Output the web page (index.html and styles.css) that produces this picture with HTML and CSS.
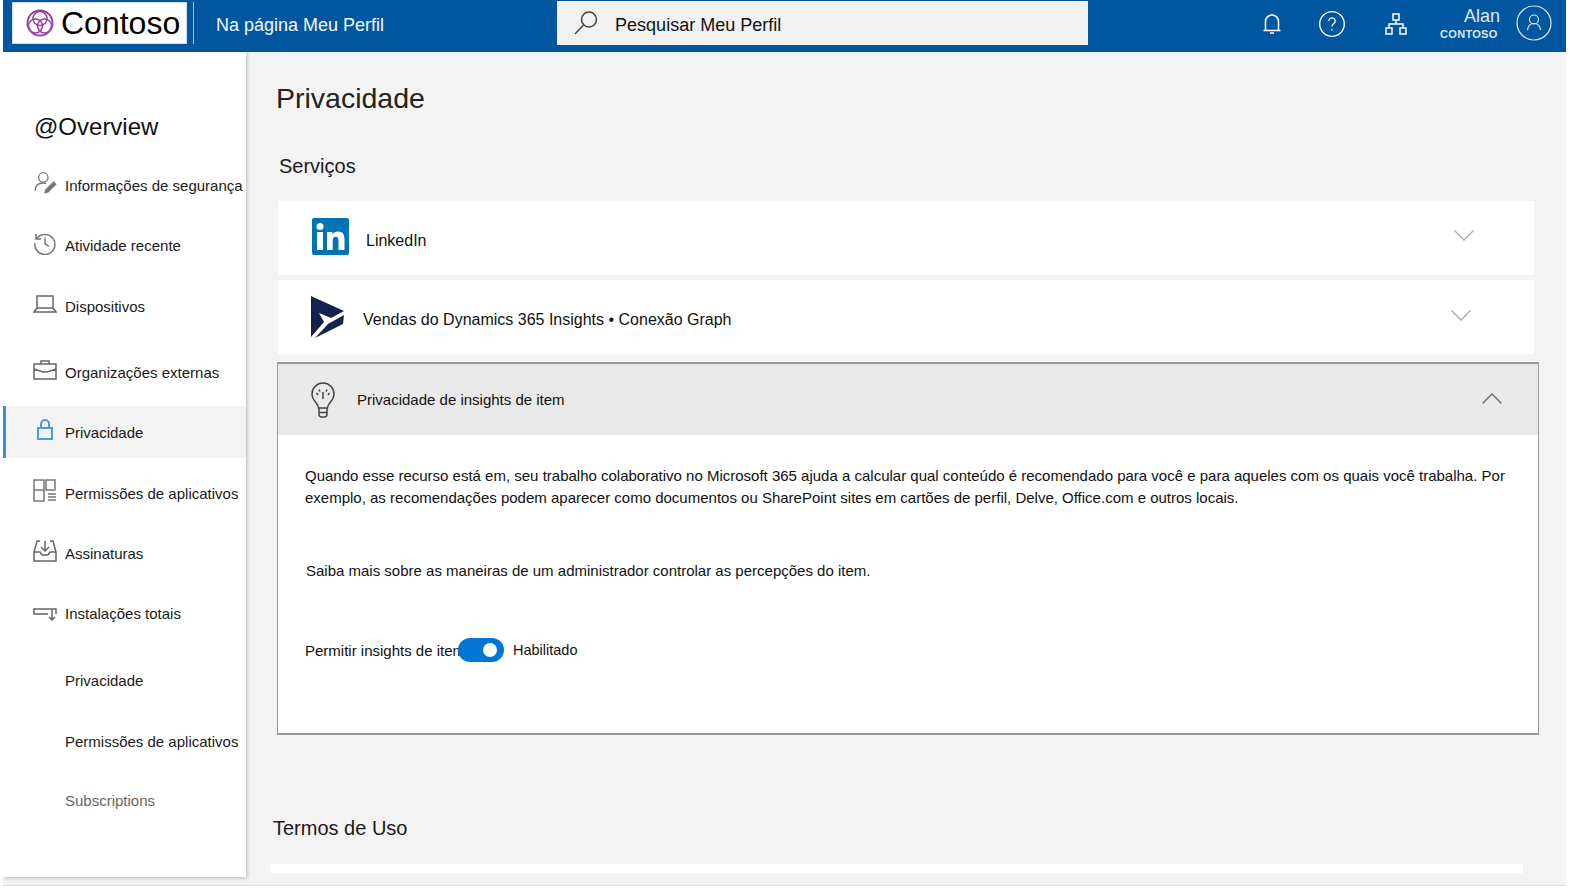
FILE: index.html
```html
<!DOCTYPE html>
<html lang="pt">

<head>
    <meta charset="UTF-8">
    <meta name="viewport" content="width=device-width, initial-scale=1.0">
    <title>Privacidade</title>
    <link rel="stylesheet" href="styles.css">
</head>

<body>
    <div class="app">
        <header class="topbar">
            <div class="logo-box">
                <svg class="logo-mark" viewBox="0 0 30 30" fill="none" stroke="#9a3fa5" stroke-width="2">
                    <circle cx="15" cy="15" r="12.5" />
                    <circle cx="15" cy="10.5" r="7" stroke-width="1.5" />
                    <circle cx="10.5" cy="18" r="7" stroke-width="1.5" />
                    <circle cx="19.5" cy="18" r="7" stroke-width="1.5" />
                </svg>
                <span class="logo-text">Contoso</span>
            </div>
            <div class="divider"></div>
            <div class="page-name">Na página Meu Perfil</div>
            <div class="search">
                <svg class="search-icon" viewBox="0 0 26 26" fill="none" stroke="#444" stroke-width="1.5">
                    <circle cx="16" cy="9.5" r="7.5" />
                    <path d="M10.5 15 2 24" />
                </svg>
                <span>Pesquisar Meu Perfil</span>
            </div>
            <div class="top-icons">
                <svg class="top-icon" viewBox="0 0 24 24" fill="none" stroke="#fff" stroke-width="1.5">
                    <path d="M5.5 18V9.5a6.500 6.500 0 0 1 13 0V18M3.500 18.500h17M10 21h4" />
                </svg>
                <svg class="top-icon help" viewBox="0 0 28 28" fill="none" stroke="#fff" stroke-width="1.3">
                    <circle cx="14" cy="14" r="12.300" />
                    <path d="M10.800 11a3.200 3.200 0 1 1 4.800 2.800c-1.100.7-1.600 1.300-1.600 2.700M14 19v1.500" />
                </svg>
                <svg class="top-icon org" viewBox="0 0 24 24" fill="none" stroke="#fff" stroke-width="1.5">
                    <rect x="9" y="2" width="6" height="6" />
                    <rect x="2" y="16" width="6" height="6" />
                    <rect x="16" y="16" width="6" height="6" />
                    <path d="M12 8v4M5 16v-4h14v4" />
                </svg>
            </div>
            <div class="user">
                <div class="user-name">Alan</div>
                <div class="user-org">CONTOSO</div>
            </div>
            <svg class="avatar" viewBox="0 0 36 36" fill="none" stroke="#dce8f3" stroke-width="1.200">
                <circle cx="18" cy="18" r="17" />
                <circle cx="18" cy="14.500" r="4.500" />
                <path d="M11.500 25c.5-4.500 3-6.500 6.500-6.500s6 2 6.500 6.500" />
            </svg>
        </header>

        <div class="layout">
            <nav class="sidebar">
                <h2 class="nav-title">@Overview</h2>
                <ul class="nav-list">
                    <li class="nav-item">
                        <svg class="nav-icon" viewBox="0 0 28 28" fill="none" stroke="#777" stroke-width="1.500">
                            <circle cx="12" cy="7.500" r="5.500" />
                            <path d="M2.500 23c0-6 3.500-9 9.500-9 1.500 0 2.500.2 3.500.6" />
                            <path d="M14 25.500l1-3.500 9-9 2.500 2.500-9 9z" fill="#777" />
                        </svg>
                        <span>Informações de segurança</span>
                    </li>
                    <li class="nav-item">
                        <svg class="nav-icon" viewBox="0 0 24 24" fill="none" stroke="#777" stroke-width="1.500">
                            <path d="M3.500 8A10 10 0 1 1 2 12M3 3v5h5M12 6.500V12.500l4 3" />
                        </svg>
                        <span>Atividade recente</span>
                    </li>
                    <li class="nav-item">
                        <svg class="nav-icon" viewBox="0 0 24 24" fill="none" stroke="#666" stroke-width="1.500">
                            <path d="M4 4h16v12H4zM1 20h22l-3-4H4z" />
                        </svg>
                        <span>Dispositivos</span>
                    </li>
                    <li class="nav-item">
                        <svg class="nav-icon" viewBox="0 0 24 24" fill="none" stroke="#666" stroke-width="1.500">
                            <path d="M1 6h22v15H1zM8 6V3h8v3M1 11l9 3h4l9-3" />
                        </svg>
                        <span>Organizações externas</span>
                    </li>
                    <li class="nav-item active">
                        <svg class="nav-icon" viewBox="0 0 24 24" fill="none" stroke="#4a9ae0" stroke-width="2">
                            <path d="M5 10h14v11H5zM8 10V6a4 4 0 0 1 8 0v4" />
                        </svg>
                        <span>Privacidade</span>
                    </li>
                    <li class="nav-item">
                        <svg class="nav-icon" viewBox="0 0 24 24" fill="none" stroke="#777" stroke-width="1.500">
                            <path d="M1 1h10v10H1zM13 1h9v10h-9zM1 11h10v11H1z" />
                            <path d="M15 15h8M15 18h8M15 21h8" />
                        </svg>
                        <span>Permissões de aplicativos</span>
                    </li>
                    <li class="nav-item">
                        <svg class="nav-icon" viewBox="0 0 24 24" fill="none" stroke="#666" stroke-width="1.500">
                            <path d="M7 2H4L1 13v9h22v-9L20 2h-3M1 13h6l2 3h6l2-3h6M12 2v10M8 8l4 4 4-4" />
                        </svg>
                        <span>Assinaturas</span>
                    </li>
                    <li class="nav-item">
                        <svg class="nav-icon" viewBox="0 0 24 24" fill="none" stroke="#666" stroke-width="1.500">
                            <path d="M15 15H1v-5h22v5M19 10v10M16 18l3 3 3-3" />
                        </svg>
                        <span>Instalações totais</span>
                    </li>
                    <li class="nav-item sub">Privacidade</li>
                    <li class="nav-item sub">Permissões de aplicativos</li>
                    <li class="nav-item sub muted">Subscriptions</li>
                </ul>
            </nav>

            <main class="content">
                <h1 class="page-title">Privacidade</h1>
                <h2 class="section-title">Serviços</h2>

                <div class="card linkedin">
                    <svg class="in-logo" viewBox="0 0 37 37">
                        <rect width="37" height="37" rx="2" fill="#0274b3" />
                        <rect x="5" y="14" width="6" height="18" fill="#fff" />
                        <circle cx="8" cy="8.500" r="3.500" fill="#fff" />
                        <path d="M15 14h5.500v2.600c1-1.800 3-3 5.500-3 5 0 6.500 3.200 6.500 8V32h-6v-9c0-2.500-.5-4.300-2.800-4.300s-3 1.800-3 4.300v9H15z" fill="#fff" />
                    </svg>
                    <span>LinkedIn</span>
                    <svg class="chevron" viewBox="0 0 20 11" fill="none" stroke="#aaa" stroke-width="1.300">
                        <path d="M.5.500 10 10 19.500.500" />
                    </svg>
                </div>

                <div class="card dynamics">
                    <svg class="dyn-logo" viewBox="0 0 34 42" fill="#14224f">
                        <path d="M1 0 34 15 21 22 9 17 14 26 1 41z" />
                        <path d="M34 19 33 28 5 42 18 28z" />
                    </svg>
                    <span>Vendas do Dynamics 365 Insights • Conexão Graph</span>
                    <svg class="chevron" viewBox="0 0 20 11" fill="none" stroke="#aaa" stroke-width="1.300">
                        <path d="M.5.500 10 10 19.500.500" />
                    </svg>
                </div>

                <section class="panel">
                    <div class="panel-head">
                        <svg class="bulb" viewBox="0 0 26 36" fill="none" stroke="#444" stroke-width="1.500">
                            <path d="M8.500 26c0-5-6.500-7-6.500-14a11 11 0 0 1 22 0c0 7-6.500 9-6.500 14zM9 26v6c0 1.500 1 3 2.500 3h3c1.500 0 2.500-1.500 2.500-3v-6M9 30.500h8" />
                            <path d="M13 17v-7M8 13 6.500 11M18 13l1.500-2M10 9.500 9 7.500M16 9.500l1-2" />
                        </svg>
                        <span>Privacidade de insights de item</span>
                        <svg class="chevron up" viewBox="0 0 20 11" fill="none" stroke="#666" stroke-width="1.300">
                            <path d="M.5 10.500 10 1l9.500 9.500" />
                        </svg>
                    </div>
                    <div class="panel-body">
                        <p class="panel-text">Quando esse recurso está em, seu trabalho colaborativo no Microsoft 365 ajuda a calcular qual conteúdo é recomendado para você e para aqueles com os quais você trabalha. Por exemplo, as recomendações podem aparecer como documentos ou SharePoint sites em cartões de perfil, Delve, Office.com e outros locais.</p>
                        <p class="panel-text learn">Saiba mais sobre as maneiras de um administrador controlar as percepções do item.</p>
                        <div class="setting">
                            <span class="setting-label">Permitir insights de item</span>
                            <span class="toggle"></span>
                            <span class="toggle-state">Habilitado</span>
                        </div>
                    </div>
                </section>

                <h2 class="section-title terms">Termos de Uso</h2>
                <div class="terms-card"></div>
            </main>
        </div>
    </div>
</body>

</html>
```

FILE: styles.css
```css
* {
    box-sizing: border-box;
}

body {
    margin: 0;
    height: 888px;
    overflow: hidden;
    background-color: #fff;
    font-family: "Liberation Sans", Arial, sans-serif;
    color: #111;
}

.app {
    width: 1563px;
    height: 886px;
    margin-left: 3px;
    background-color: #f3f3f3;
    border-bottom: 1px solid #ddd;
    overflow: hidden;
}

/* top bar */
.topbar {
    display: flex;
    align-items: center;
    height: 52px;
    background-color: #01579f;
}

.logo-box {
    display: flex;
    align-items: center;
    width: 175px;
    height: 42px;
    margin-left: 9px;
    margin-bottom: 6px;
    padding-left: 12px;
    background-color: #fff;
    border: 1px solid #cfdfed;
}

.logo-mark {
    width: 30px;
    height: 30px;
}

.logo-text {
    margin-left: 6px;
    font-size: 32px;
    color: #000;
}

.divider {
    width: 1px;
    height: 42px;
    margin-left: 6px;
    margin-bottom: 6px;
    background-color: #a9c5de;
}

.page-name {
    margin-left: 22px;
    margin-bottom: 2px;
    font-size: 18px;
    color: #f4f8fb;
}

.search {
    display: flex;
    align-items: center;
    width: 531px;
    height: 44px;
    margin-left: 173px;
    margin-bottom: 6px;
    padding-left: 16px;
    background-color: #f1f1f1;
    font-size: 18px;
    color: #111;
}

.search-icon {
    width: 26px;
    height: 26px;
    margin-right: 16px;
}

.search span {
    padding-top: 5px;
}

.top-icons {
    display: flex;
    align-items: center;
    margin-left: 172px;
    margin-bottom: 4px;
}

.top-icon {
    width: 24px;
    height: 24px;
}

.help {
    width: 28px;
    height: 28px;
    margin-left: 34px;
}

.org {
    margin-left: 38px;
}

.user {
    width: 60px;
    margin-left: 32px;
    margin-bottom: 6px;
    text-align: right;
    color: #dce8f3;
}

.user-name {
    font-size: 18px;
    line-height: 22px;
}

.user-org {
    font-size: 11px;
    font-weight: bold;
    line-height: 14px;
    letter-spacing: .3px;
    margin-right: 5px;
}

.avatar {
    width: 36px;
    height: 36px;
    margin-left: 16px;
    margin-bottom: 7px;
}

.layout {
    display: flex;
}

/* sidebar */
.sidebar {
    width: 243px;
    height: 825px;
    background-color: #fff;
    box-shadow: 1px 1px 4px rgba(0, 0, 0, .25);
}

.nav-title {
    margin: 60px 0 0 31px;
    font-size: 24px;
    font-weight: normal;
    line-height: 30px;
}

.nav-list {
    display: grid;
    grid-template-rows: 60px 61px 66px 60px 61px 60px 60px 67px 61px 59px 60px;
    margin: 17px 0 0;
    padding: 0;
    list-style: none;
}

.nav-item {
    position: relative;
    display: flex;
    align-items: center;
    padding-left: 62px;
    font-size: 15px;
    height: 52px;
    color: #1a1a1a;
}

.nav-icon {
    position: absolute;
    left: 30px;
    top: 12px;
    width: 24px;
    height: 24px;
}

.nav-item.active {
    background-color: #f3f3f3;
    border-left: 3px solid #3a8fd8;
    padding-left: 59px;
}

.nav-item.active .nav-icon {
    left: 27px;
}

.muted {
    color: #666;
}

/* main area */
.content {
    flex: 1;
    padding-left: 30px;
}

.page-title {
    margin: 28px 0 0;
    font-size: 28.500px;
    font-weight: normal;
    line-height: 36px;
    color: #222;
}

.section-title {
    margin: 36px 0 0 3px;
    font-size: 20px;
    font-weight: normal;
    line-height: 28px;
    color: #1a1a1a;
}

.card {
    display: flex;
    align-items: center;
    width: 1256px;
    height: 74px;
    margin-left: 2px;
    background-color: #fff;
    font-size: 16px;
}

.linkedin {
    margin-top: 21px;
    padding-left: 34px;
}

.dynamics {
    margin-top: 5px;
    padding-left: 32px;
}

.in-logo {
    width: 37px;
    height: 37px;
    margin-right: 17px;
    margin-bottom: 3px;
}

.dyn-logo {
    width: 34px;
    height: 42px;
    margin-right: 19px;
}

.card span {
    padding-top: 6px;
}

.chevron {
    width: 20px;
    height: 11px;
    margin-left: auto;
    margin-right: 60px;
    margin-bottom: 6px;
}

.dynamics .chevron {
    margin-right: 63px;
    margin-bottom: 4px;
}

.panel {
    width: 1262px;
    height: 373px;
    margin-top: 8px;
    margin-left: 1px;
    background-color: #fff;
    border: 1px solid #999;
    border-top-width: 2px;
    border-bottom-width: 2px;
}

.panel-head {
    display: flex;
    align-items: center;
    height: 71px;
    padding-left: 32px;
    background-color: #e9e9e9;
    font-size: 15px;
}

.bulb {
    width: 26px;
    height: 36px;
    margin-right: 21px;
}

.chevron.up {
    margin-right: 36px;
    margin-bottom: 2px;
}

.panel-body {
    padding: 30px 27px 0;
}

.panel-text {
    margin: 0;
    font-size: 15px;
    line-height: 22px;
    color: #111;
}

.learn {
    margin-top: 51px;
    margin-left: 1px;
}

.setting {
    display: flex;
    align-items: center;
    margin-top: 56px;
    font-size: 15px;
}

.setting-label {
    width: 153px;
    white-space: nowrap;
}

.toggle {
    position: relative;
    width: 46px;
    height: 24px;
    border-radius: 12px;
    background-color: #0276d4;
}

.toggle::after {
    content: "";
    position: absolute;
    top: 5px;
    right: 7px;
    width: 14px;
    height: 14px;
    border-radius: 50%;
    background-color: #fff;
}

.toggle-state {
    margin-left: 9px;
    font-size: 14.500px;
}

.terms {
    margin: 79px 0 0;
    margin-left: -3px;
}

.terms-card {
    width: 1253px;
    height: 9px;
    margin-top: 22px;
    margin-left: -6px;
    background-color: #fff;
}
```
